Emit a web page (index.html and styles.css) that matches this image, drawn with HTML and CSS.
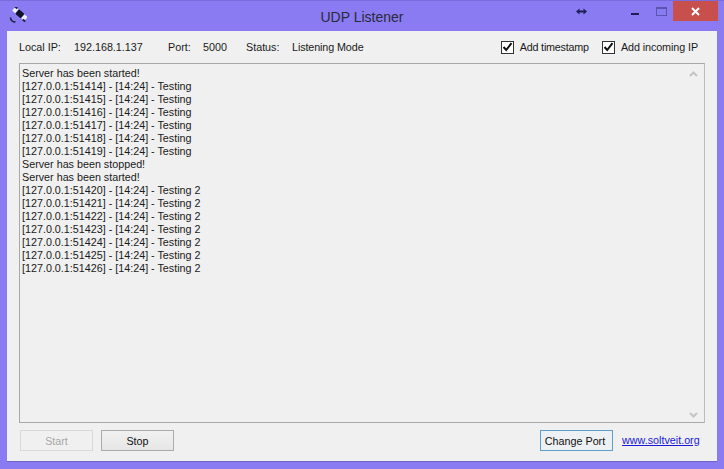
FILE: index.html
```html
<!DOCTYPE html>
<html lang="en">
<head>
<meta charset="utf-8">
<title>UDP Listener</title>
<link rel="stylesheet" href="styles.css">
</head>
<body>
<div class="window">
  <header class="titlebar">
    <svg class="app-icon" width="18" height="18" viewBox="0 0 18 18">
      <path d="M1.5 10.5 C1.5 13 3.5 15 6.5 15" fill="none" stroke="#1c2440" stroke-width="1.6"/>
      <g transform="rotate(40 10.5 6.5)">
        <rect x="7.5" y="3.5" width="7" height="6" rx="1" fill="#0f1426"/>
        <rect x="3" y="4" width="4" height="5" fill="#eceef9"/>
        <rect x="15" y="4" width="4" height="5" fill="#eceef9"/>
        <rect x="2.5" y="3" width="3" height="2" fill="#1c2440"/>
        <rect x="17" y="8" width="3" height="2" fill="#1c2440"/>
      </g>
    </svg>
    <h1 class="title">UDP Listener</h1>
    <div class="caption">
      <svg class="resize" width="11" height="7" viewBox="0 0 11 7"><path d="M0 3.5 L3.5 0.5 V2.6 H7.5 V0.5 L11 3.5 L7.5 6.5 V4.4 H3.5 V6.5 Z" fill="#1e1f55"/></svg>
      <span class="minimize"></span>
      <span class="maximize"></span>
      <span class="close">
        <svg width="9" height="9" viewBox="0 0 9 9"><path d="M1 1 L8 8 M8 1 L1 8" stroke="#fff" stroke-width="2"/></svg>
      </span>
    </div>
  </header>
  <main class="client">
    <div class="status">
      <span class="lbl-ip">Local IP:</span>
      <span class="val-ip">192.168.1.137</span>
      <span class="lbl-port">Port:</span>
      <span class="val-port">5000</span>
      <span class="lbl-status">Status:</span>
      <span class="val-status">Listening Mode</span>
      <label class="check first"><span class="box"><svg width="11" height="10" viewBox="0 0 11 10"><path d="M1.5 5 L4.2 8 L9.5 1.2" fill="none" stroke="#111" stroke-width="2"/></svg></span>Add timestamp</label>
      <label class="check second"><span class="box"><svg width="11" height="10" viewBox="0 0 11 10"><path d="M1.5 5 L4.2 8 L9.5 1.2" fill="none" stroke="#111" stroke-width="2"/></svg></span>Add incoming IP</label>
    </div>
    <section class="log">
      <div class="lines">
        <div>Server has been started!</div>
        <div>[127.0.0.1:51414] - [14:24] - Testing</div>
        <div>[127.0.0.1:51415] - [14:24] - Testing</div>
        <div>[127.0.0.1:51416] - [14:24] - Testing</div>
        <div>[127.0.0.1:51417] - [14:24] - Testing</div>
        <div>[127.0.0.1:51418] - [14:24] - Testing</div>
        <div>[127.0.0.1:51419] - [14:24] - Testing</div>
        <div>Server has been stopped!</div>
        <div>Server has been started!</div>
        <div>[127.0.0.1:51420] - [14:24] - Testing 2</div>
        <div>[127.0.0.1:51421] - [14:24] - Testing 2</div>
        <div>[127.0.0.1:51422] - [14:24] - Testing 2</div>
        <div>[127.0.0.1:51423] - [14:24] - Testing 2</div>
        <div>[127.0.0.1:51424] - [14:24] - Testing 2</div>
        <div>[127.0.0.1:51425] - [14:24] - Testing 2</div>
        <div>[127.0.0.1:51426] - [14:24] - Testing 2</div>
      </div>
      <div class="scrollbar">
        <svg width="9" height="6" viewBox="0 0 9 6"><path d="M1 5 L4.5 1.5 L8 5" fill="none" stroke="#c4c4c4" stroke-width="2"/></svg>
        <svg width="9" height="6" viewBox="0 0 9 6"><path d="M1 1 L4.5 4.5 L8 1" fill="none" stroke="#c4c4c4" stroke-width="2"/></svg>
      </div>
    </section>
    <footer class="actions">
      <button class="btn" disabled>Start</button>
      <button class="btn stop">Stop</button>
      <button class="btn port">Change Port</button>
      <a class="link" href="#">www.soltveit.org</a>
    </footer>
  </main>
</div>
</body>
</html>
```
FILE: styles.css
```css
* { box-sizing: border-box; }
html, body { margin: 0; height: 100%; }
body { font-family: "Liberation Sans", Arial, sans-serif; font-size: 10.75px; color: #1a1a1a; overflow: hidden; }
.window { width: 724px; height: 469px; background: #8a7bf2; display: flex; flex-direction: column; border-top: 1px solid #7a6bdc; padding: 0 7px 7px; }
.titlebar { height: 30px; flex: none; display: flex; align-items: flex-start; margin: 0 -7px; position: relative; }
.app-icon { position: absolute; left: 9px; top: 6px; }
.title { margin: 9px 0 0; width: 100%; text-align: center; font-size: 14px; font-weight: 400; line-height: 14px; color: #2a2a3a; }
.caption { position: absolute; top: 0; right: 0; height: 20px; display: flex; }
.resize { position: absolute; left: -97px; top: 7px; }
.minimize { position: absolute; left: -42px; top: 12px; width: 8px; height: 2px; background: #1e1f55; }
.maximize { position: absolute; left: -17px; top: 6px; width: 11px; height: 9px; border: 1px solid #5a55ad; border-top-width: 2px; }
.close { width: 45px; height: 20px; margin-right: 6px; background: #c8504c; display: flex; align-items: center; justify-content: center; }
.client { flex: 1; background: #f0f0f0; display: flex; flex-direction: column; padding: 0 12px 0; border-bottom: 1px solid #6f64c4; }
.status { height: 32px; flex: none; display: flex; align-items: center; position: relative; }
.lbl-ip { width: 55px; }
.val-ip { width: 94px; }
.lbl-port { width: 35px; }
.val-port { width: 43px; }
.lbl-status { width: 46px; }
.val-status { letter-spacing: -0.1px; }
.check { display: flex; align-items: center; gap: 6px; }
.check.first { margin-left: auto; margin-right: 13px; letter-spacing: -0.2px; }
.check.second { margin-right: 7px; letter-spacing: -0.08px; }
.box { width: 13px; height: 13px; border: 1px solid #333; background: #fff; display: flex; align-items: center; justify-content: center; }
.log { height: 360px; flex: none; border: 1px solid #a8a8a8; border-right-color: #bcbcbc; display: flex; background: #f0f0f0; }
.lines { flex: 1; padding: 3px 2px; line-height: 13px; }
.scrollbar { width: 18px; padding: 7px 3px 4px 0; display: flex; flex-direction: column; justify-content: space-between; align-items: center; background: #f0f0f0; }
.actions { flex: 1; display: flex; align-items: flex-start; padding: 7px 4px 0 1px; }
.btn { width: 73px; height: 21px; padding: 0; font: inherit; border: 1px solid #ababab; color: #111; background: linear-gradient(#f1f1f1, #e6e6e6); }
.btn:disabled { color: #a8a8a8; border-color: #d9d9d9; background: #f0f0f0; }
.stop { margin-left: 8px; }
.port { margin-left: auto; padding-right: 3px; border-color: #5d9fc8; background: #eef1f3; }
.link { margin-left: 9px; margin-top: 4px; color: #1a1ad6; width: 79px; }
```
